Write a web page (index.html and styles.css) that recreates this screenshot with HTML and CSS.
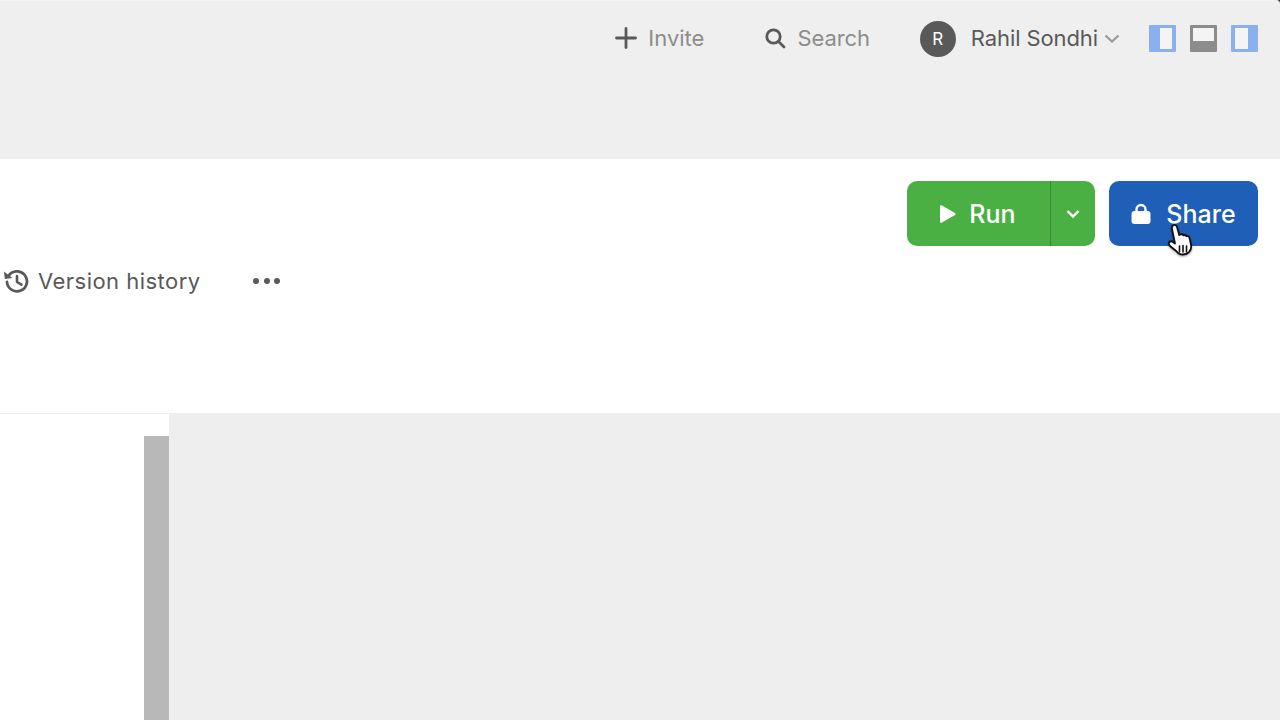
FILE: index.html
```html
<!DOCTYPE html>
<html>
<head>
    <title>Rahil Sondhi - Base</title>
    <link rel="stylesheet" href="styles.css">
</head>
<body>
    <header class="topbar">
        <div class="nav-item invite">
            <svg class="icon-plus" width="24" height="24" viewBox="0 0 24 24"><path d="M12 2.500v19M2.500 12h19" stroke="#595959" stroke-width="2.800" stroke-linecap="round" fill="none"/></svg>
            <span>Invite</span>
        </div>
        <div class="nav-item search">
            <svg width="22" height="22" viewBox="0 0 22 22"><circle cx="9.500" cy="9.500" r="6.700" stroke="#595959" stroke-width="2.800" fill="none"/><path d="M14.500 14.500l5.500 5.500" stroke="#595959" stroke-width="2.800" stroke-linecap="round"/></svg>
            <span>Search</span>
        </div>
        <div class="user">
            <div class="avatar">R</div>
            <span class="user-name">Rahil Sondhi</span>
            <svg width="16" height="11" viewBox="0 0 16 11"><path d="M1.500 2.500l6.500 6 6.500-6" stroke="#999" stroke-width="2.200" fill="none"/></svg>
        </div>
        <div class="panels">
            <div class="panel-toggle blue left"></div>
            <div class="panel-toggle grey bottom"></div>
            <div class="panel-toggle blue right"></div>
        </div>
    </header>

    <section class="toolbar">
        <div class="actions">
            <div class="run-group">
                <div class="run">
                    <svg width="18" height="20" viewBox="0 0 18 20"><path d="M1 2.200v15.600c0 .8.800 1.300 1.500.9l13.500-7.800c.7-.4.7-1.400 0-1.800L2.500 1.300C1.800.9 1 1.400 1 2.200z" fill="#fff"/></svg>
                    <span>Run</span>
                </div>
                <div class="run-menu">
                    <svg width="14" height="10" viewBox="0 0 14 10"><path d="M1.500 2l5.500 5.500L12.500 2" stroke="#fff" stroke-width="2.400" fill="none"/></svg>
                </div>
            </div>
            <div class="share">
                <svg width="20" height="22" viewBox="0 0 20 22"><path d="M5.500 10V6.500a4.500 4.500 0 0 1 9 0V10" stroke="#fff" stroke-width="2.400" fill="none"/><rect x="0.500" y="8" width="19" height="13" rx="3" fill="#fff"/></svg>
                <span>Share</span>
                <svg class="cursor" width="28" height="34" viewBox="0 0 28 34"><path d="M7 2.500c1.500-1.200 3.500-.5 4 1.500l2.200 8 1.500-.6c1.200-.4 2.300 0 2.800 1 1-.5 2.400-.3 3 .8 1.200-.5 2.500.2 3 1.500l1.500 7c.6 3-.2 5.500-2 7.500-1.500 1.500-3.500 2.300-6 2.300-3 0-5-1-6.500-3.300L4 23c-1-1.500-1.600-3-.6-4 1-1 2.500-.8 3.800.3L9 20.500 6 6c-.3-1.400 0-2.700 1-3.500z" fill="#fff" stroke="#111" stroke-width="1.800" stroke-linejoin="round"/><path d="M13.500 23v6M17 22.500v6.500M20.500 23v6" stroke="#111" stroke-width="1.600" stroke-linecap="round"/></svg>
            </div>
        </div>
        <div class="toolbar-row">
            <div class="history">
                <svg width="26" height="26" viewBox="0 0 26 26"><path d="M5.200 8.500A10 10 0 1 1 4 14" stroke="#595959" stroke-width="2.800" fill="none" stroke-linecap="round"/><path d="M1 3.500l.8 7.500 7.400-1z" fill="#595959"/><path d="M14 8v6l4.500 2.700" stroke="#595959" stroke-width="2.600" fill="none" stroke-linecap="round" stroke-linejoin="round"/></svg>
                <span>Version history</span>
            </div>
            <div class="more"><i></i><i></i><i></i></div>
        </div>
    </section>

    <main class="main">
        <div class="sidebar">
            <div class="scrollbar"></div>
        </div>
        <div class="canvas"></div>
    </main>
</body>
</html>
```

FILE: styles.css
```css
* {
    box-sizing: border-box;
}
html, body {
    height: 100%;
}
body {
    margin: 0;
    height: 720px;
    overflow: hidden;
    display: flex;
    flex-direction: column;
    font-family: Inter, "Liberation Sans", sans-serif;
    background: #333;
    color: #595959;
}
.topbar {
    height: 159px;
    flex: none;
    background: #efefef;
    border-top: 1px solid #f4f4f4;
    border-top-right-radius: 4px;
    display: flex;
    align-items: flex-start;
    justify-content: flex-end;
    padding: 19px 22px 0 0;
}
.nav-item {
    display: flex;
    align-items: center;
    height: 36px;
    font-size: 22px;
    color: #8c8c8c;
}
.invite {
    gap: 10px;
    margin-right: 60px;
}
.search {
    gap: 11px;
    margin-right: 50px;
    letter-spacing: -0.1px;
}
.user {
    display: flex;
    align-items: center;
    height: 36px;
    margin-right: 29px;
}
.avatar {
    width: 36px;
    height: 36px;
    margin-top: 1px;
    border-radius: 50%;
    background: #595959;
    color: white;
    font-size: 17px;
    font-weight: 400;
    display: flex;
    align-items: center;
    justify-content: center;
    margin-right: 15px;
}
.user-name {
    font-size: 22px;
    letter-spacing: -0.1px;
    margin-right: 6px;
}
.panels {
    display: flex;
    gap: 14px;
    height: 36px;
    align-items: center;
}
.panel-toggle {
    width: 27px;
    height: 27px;
    border-radius: 1px;
    border-style: solid;
}
.panel-toggle.blue {
    background: #f4f4f4;
    border-color: #8bb0f0;
}
.panel-toggle.grey {
    background: #f4f4f4;
    border-color: #8c8c8c;
}
.panel-toggle.left {
    border-width: 3px 4px 3px 11px;
}
.panel-toggle.right {
    border-width: 3px 10px 3px 4px;
}
.panel-toggle.bottom {
    border-width: 3px 3px 11px 3px;
}
.toolbar {
    height: 255px;
    flex: none;
    background: white;
    border-bottom: 1px solid #eeeeee;
    padding-top: 22px;
}
.actions {
    display: flex;
    justify-content: flex-end;
    gap: 14px;
    padding-right: 22px;
}
.run-group {
    display: flex;
    width: 188px;
    height: 65px;
    background: #4bb044;
    border-radius: 10px;
    color: white;
}
.run {
    width: 144px;
    display: flex;
    align-items: center;
    justify-content: center;
    gap: 12px;
    border-right: 1px solid #39893a;
    font-size: 25px;
    font-weight: 550;
    padding-right: 2px;
}
.run-menu {
    flex: 1;
    display: flex;
    align-items: center;
    justify-content: center;
}
.share {
    position: relative;
    width: 149px;
    height: 65px;
    background: #1f5fb8;
    border-radius: 10px;
    color: white;
    display: flex;
    align-items: center;
    justify-content: center;
    gap: 15px;
    font-size: 25px;
    font-weight: 550;
}
.cursor {
    position: absolute;
    left: 57px;
    top: 42px;
    filter: drop-shadow(0 1px 1px rgba(0, 0, 0, 0.4));
}
.toolbar-row {
    display: flex;
    align-items: center;
    height: 36px;
    margin-top: 17px;
    padding-left: 3px;
}
.history {
    display: flex;
    align-items: center;
    gap: 9px;
    font-size: 22px;
    letter-spacing: 0.47px;
}
.more {
    display: flex;
    gap: 4.500px;
    margin-left: 52.500px;
}
.more i {
    width: 6px;
    height: 6px;
    border-radius: 50%;
    background: #595959;
}
.main {
    flex: 1;
    display: flex;
    background: white;
}
.sidebar {
    width: 169px;
    display: flex;
    justify-content: flex-end;
    padding-top: 22px;
}
.scrollbar {
    width: 25px;
    background: #b8b8b8;
}
.canvas {
    flex: 1;
    background: #eeeeee;
}
```
